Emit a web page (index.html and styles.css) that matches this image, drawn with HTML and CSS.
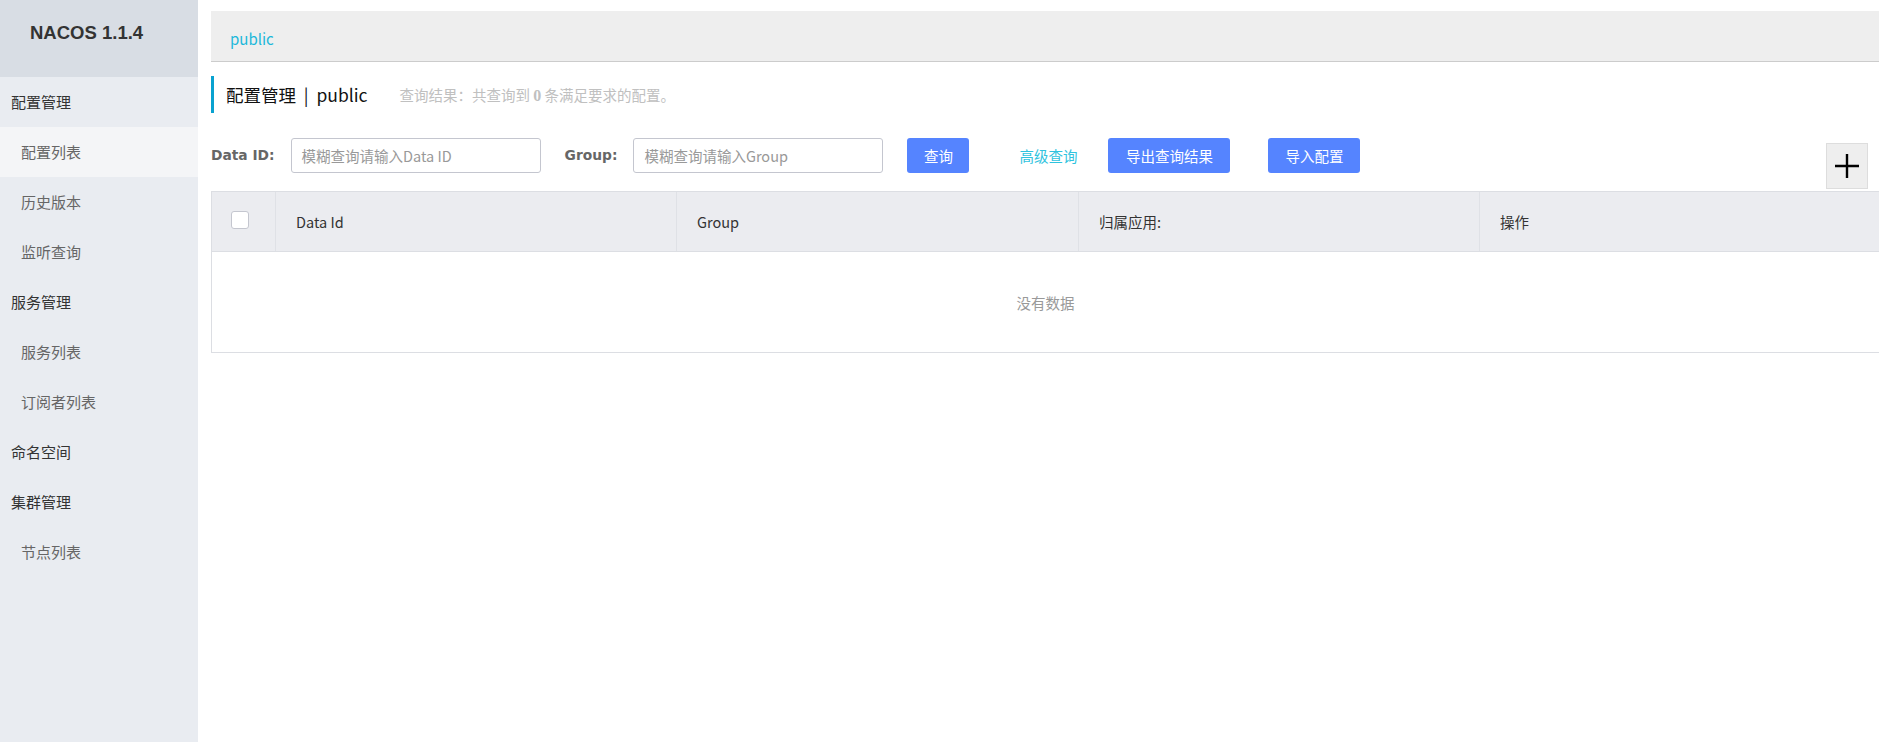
FILE: index.html
```html
<!DOCTYPE html>
<html lang="zh">
<head>
<meta charset="utf-8">
<title>Nacos</title>
<link rel="stylesheet" href="styles.css">
</head>
<body>
<div class="app">
  <aside class="sidebar">
    <div class="brand">NACOS 1.1.4</div>
    <ul class="menu">
      <li class="group">配置管理</li>
      <li class="item active">配置列表</li>
      <li class="item">历史版本</li>
      <li class="item">监听查询</li>
      <li class="group">服务管理</li>
      <li class="item">服务列表</li>
      <li class="item">订阅者列表</li>
      <li class="group">命名空间</li>
      <li class="group">集群管理</li>
      <li class="item">节点列表</li>
    </ul>
  </aside>
  <main class="main">
    <div class="ns-bar"><span class="ns-link">public</span></div>
    <div class="title-row">
      <span class="title">配置管理&nbsp;&nbsp;|&nbsp;&nbsp;public</span>
      <span class="summary">查询结果：共查询到 <b>0</b> 条满足要求的配置。</span>
    </div>
    <div class="filters">
      <label class="f-label">Data ID:</label>
      <div class="f-input">模糊查询请输入Data ID</div>
      <label class="f-label group-label">Group:</label>
      <div class="f-input">模糊查询请输入Group</div>
      <button class="btn btn-query">查询</button>
      <span class="adv">高级查询</span>
      <button class="btn btn-export">导出查询结果</button>
      <button class="btn btn-import">导入配置</button>
      <button class="plus" aria-label="add">
        <svg width="26" height="26" viewBox="0 0 26 26"><path d="M13 1V25M1 13H25" stroke="#000" stroke-width="2.4" fill="none"/></svg>
      </button>
    </div>
    <div class="table">
      <div class="thead">
        <div class="th th-check"><span class="checkbox"></span></div>
        <div class="th">Data Id</div>
        <div class="th">Group</div>
        <div class="th">归属应用:</div>
        <div class="th">操作</div>
      </div>
      <div class="empty">没有数据</div>
    </div>
  </main>
</div>
</body>
</html>
```
FILE: styles.css
```css
html, body {
  margin: 0;
  padding: 0;
  height: 100%;
  overflow: hidden;
  background: #fff;
  font-family: "Noto Sans CJK SC", "Noto Sans", sans-serif;
  font-size: 15px;
}
.app {
  display: flex;
  height: 742px;
}
.sidebar {
  width: 198px;
  flex: none;
  background: #e9ecf1;
}
.brand {
  height: 77px;
  background: #d8dde4;
  color: #333;
  font-family: "Liberation Sans", Arial, sans-serif;
  font-weight: bold;
  font-size: 18.5px;
  padding-left: 30px;
  padding-top: 22px;
  box-sizing: border-box;
}
.menu {
  list-style: none;
  margin: 0;
  padding: 0;
}
.menu li {
  height: 50px;
  line-height: 50px;
  font-size: 15px;
}
.menu .group {
  color: #333;
  padding-left: 11px;
}
.menu .item {
  color: #666;
  padding-left: 21px;
}
.menu .item.active {
  background: #f4f5f7;
}
.main {
  flex: 1;
  min-width: 0;
  padding: 11px 0 0 13px;
}
.ns-bar {
  height: 50px;
  background: #eeeeee;
  border-bottom: 1px solid #cccccc;
  padding-left: 19px;
  display: flex;
  align-items: center;
}
.ns-link {
  color: #1cb8da;
  font-size: 15px;
  margin-top: 5px;
}
.title-row {
  margin-top: 14px;
  height: 37px;
  border-left: 3px solid #09a2d0;
  padding-left: 12px;
  display: flex;
  align-items: center;
}
.title {
  font-size: 17.5px;
  color: #111;
}
.summary {
  margin-left: 32px;
  font-size: 14.5px;
  color: #c0c0c0;
}
.summary b {
  font-family: "Liberation Serif", serif;
  font-size: 16px;
}
.filters {
  margin-top: 25px;
  display: flex;
  align-items: flex-start;
}
.f-label {
  height: 35px;
  line-height: 35px;
  font-family: "DejaVu Sans", Verdana, sans-serif;
  font-weight: bold;
  font-size: 13.8px;
  color: #666;
}
.group-label {
  margin-left: 24px;
}
.f-input {
  margin-left: 16px;
  width: 250px;
  height: 35px;
  box-sizing: border-box;
  border: 1px solid #c4c6cf;
  border-radius: 3px;
  padding-left: 10px;
  line-height: 33px;
  color: #999;
  font-size: 14.5px;
}
.btn {
  height: 35px;
  border: none;
  border-radius: 3px;
  background: #5584ff;
  color: #fff;
  font-family: "Noto Sans CJK SC", sans-serif;
  font-size: 14.5px;
  padding: 0;
}
.btn-query {
  margin-left: 24px;
  width: 62px;
}
.adv {
  margin-left: 50px;
  height: 35px;
  line-height: 35px;
  color: #2fc3de;
  font-size: 14.5px;
}
.btn-export {
  margin-left: 31px;
  width: 122px;
}
.btn-import {
  margin-left: 38px;
  width: 92px;
}
.plus {
  margin-left: auto;
  margin-right: 11px;
  margin-top: 5px;
  width: 42px;
  height: 46px;
  box-sizing: border-box;
  background: #eeeeee;
  border: 1px solid #dddddd;
  padding: 0;
  display: flex;
  align-items: center;
  justify-content: center;
}
.plus svg {
  display: block;
}
.table {
  margin-top: 2px;
  border: 1px solid #dcdee3;
  border-right: none;
}
.thead {
  display: grid;
  grid-template-columns: 63px 401px 402px 401px 1fr;
  height: 59px;
  background: #ebecf0;
  border-bottom: 1px solid #dcdee3;
}
.th {
  display: flex;
  align-items: center;
  padding-left: 20px;
  border-left: 1px solid #dfe1e6;
  color: #333;
  font-size: 14.5px;
}
.th:first-child {
  border-left: none;
}
.th-check {
  padding-left: 19px;
  padding-bottom: 3px;
}
.checkbox {
  display: block;
  width: 18px;
  height: 18px;
  box-sizing: border-box;
  background: #fff;
  border: 1px solid #c4c6cf;
  border-radius: 3px;
}
.empty {
  height: 100px;
  display: flex;
  align-items: center;
  justify-content: center;
  color: #999;
  font-size: 14.5px;
}
```
